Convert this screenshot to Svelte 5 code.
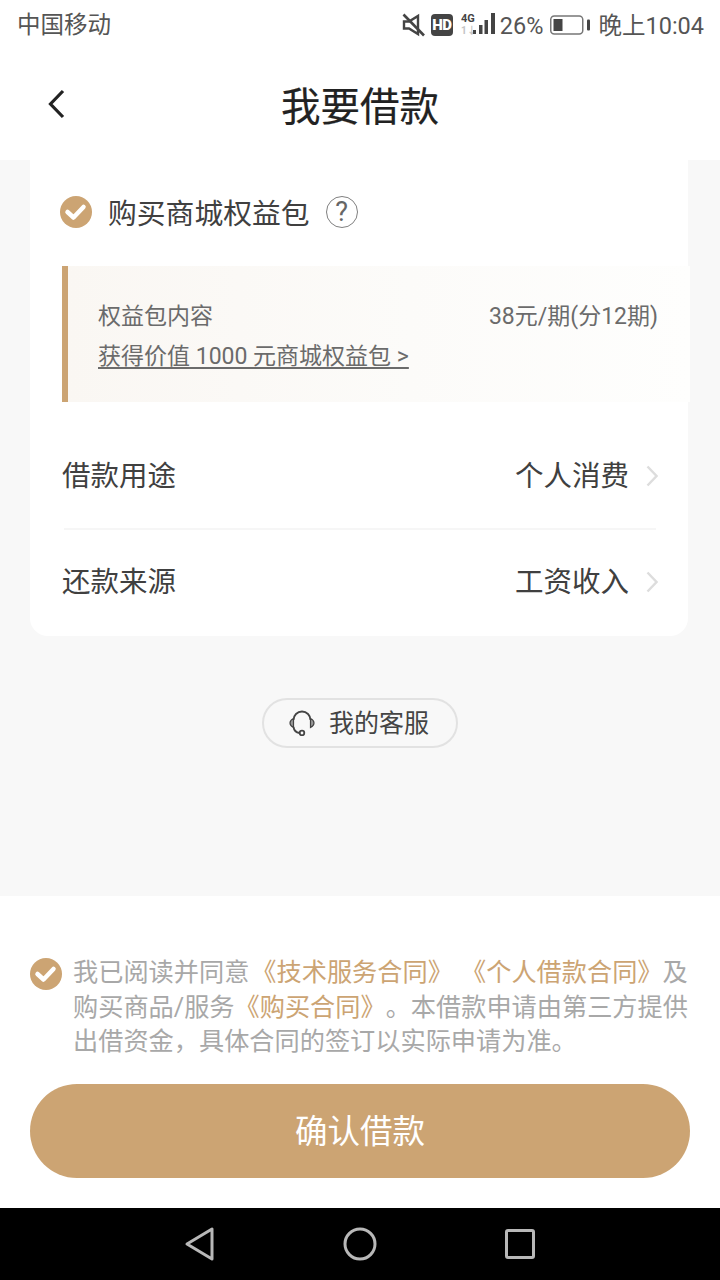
<script>
  const checkPath = 'M7.500 16l6 5.500 10-10.500';
</script>

<div class="page">
  <header class="top">
    <div class="status">
      <span class="carrier">中国移动</span>
      <div class="status-right">
        <svg class="mute" width="24" height="24" viewBox="0 0 24 24" fill="none">
          <path d="M3 8.500h5L17 3v18l-9-5.500H3z" stroke="#444" stroke-width="2.400"/>
          <path d="M2.500 1.500L23 22.500" stroke="#444" stroke-width="2.600"/>
        </svg>
        <span class="hd">HD</span>
        <svg class="signal" width="36" height="26" viewBox="0 0 36 26">
          <text x="0" y="10" class="sig4g">4G</text>
          <text x="0" y="22" class="sig-sub">1↓</text>
          <rect x="12" y="18" width="3" height="4" fill="#444"/>
          <rect x="18" y="13" width="3.500" height="9" fill="#444"/>
          <rect x="23.500" y="8" width="3.500" height="14" fill="#444"/>
          <rect x="30" y="1" width="4" height="21" fill="#444"/>
        </svg>
        <span class="pct">26%</span>
        <svg class="batt" width="41" height="20" viewBox="0 0 41 20" fill="none">
          <rect x="0.750" y="1" width="32" height="18" rx="3.500" stroke="#777" stroke-width="1.500"/>
          <rect x="3.500" y="4" width="9" height="12" fill="#444"/>
          <rect x="37" y="4.500" width="3" height="11" rx="1" fill="#444"/>
        </svg>
        <span class="time">晚上10:04</span>
      </div>
    </div>
    <div class="nav">
      <svg class="back" width="20" height="32" viewBox="0 0 20 32" fill="none">
        <path d="M16 3L3.500 16 16 29" stroke="#222" stroke-width="3.200"/>
      </svg>
      <h1>我要借款</h1>
    </div>
  </header>

  <main class="body">
    <section class="card">
      <div class="pack-row">
        <svg class="check" width="32" height="32" viewBox="0 0 32 32">
          <circle cx="16" cy="16" r="16" fill="#cca473"/>
          <path d={checkPath} fill="none" stroke="#fff" stroke-width="4.500" stroke-linecap="round" stroke-linejoin="round"/>
        </svg>
        <span class="pack-title">购买商城权益包</span>
        <span class="help">?</span>
      </div>
      <div class="benefit">
        <div class="benefit-line">
          <span>权益包内容</span>
          <span>38元/期(分12期)</span>
        </div>
        <a class="benefit-link" href="#benefit">获得价值 1000 元商城权益包 &gt;</a>
      </div>
      <div class="rows">
        <div class="row first">
          <span>借款用途</span>
          <span class="value">个人消费
            <svg width="12" height="22" viewBox="0 0 12 22" fill="none"><path d="M1.500 1.500L10.500 11 1.500 20.500" stroke="#ddd" stroke-width="2.400"/></svg>
          </span>
        </div>
        <div class="divider"></div>
        <div class="row second">
          <span>还款来源</span>
          <span class="value">工资收入
            <svg width="12" height="22" viewBox="0 0 12 22" fill="none"><path d="M1.500 1.500L10.500 11 1.500 20.500" stroke="#ddd" stroke-width="2.400"/></svg>
          </span>
        </div>
      </div>
    </section>

    <div class="service-wrap">
      <div class="service">
        <svg width="26" height="26" viewBox="0 0 26 26" fill="none" stroke="#444" stroke-width="1.800">
          <path d="M4.500 10a8.500 8.500 0 0 1 17 0"/>
          <path d="M4.500 8.500C2.500 9.500 1 11 1 13s1.500 3.500 3.500 4.500zM21.500 8.500c2 1 3.500 2.500 3.500 4.500s-1.500 3.500-3.500 4.500z" fill="#999" stroke-width="1.200"/>
          <path d="M4.500 17c.5 3.500 2.500 5.500 6 6"/>
          <circle cx="13" cy="23" r="2.300"/>
        </svg>
        <span>我的客服</span>
      </div>
    </div>
  </main>

  <footer class="foot">
    <div class="agree">
      <svg class="check agree-check" width="32" height="32" viewBox="0 0 32 32">
        <circle cx="16" cy="16" r="16" fill="#cca473"/>
        <path d={checkPath} fill="none" stroke="#fff" stroke-width="4.500" stroke-linecap="round" stroke-linejoin="round"/>
      </svg>
      <p>我已阅读并同意<em class="lead">《技术服务合同》 《个人借款合同》</em>及购买商品/服务<em>《购买合同》</em>。本借款申请由第三方提供出借资金，具体合同的签订以实际申请为准。</p>
    </div>
    <button class="confirm">确认借款</button>
  </footer>

  <nav class="sysnav">
    <svg width="32" height="36" viewBox="0 0 32 36" fill="none" stroke="#b8b8b8" stroke-width="3" stroke-linejoin="round">
      <path d="M28 3v30L3 18z"/>
    </svg>
    <svg width="34" height="34" viewBox="0 0 34 34" fill="none" stroke="#b8b8b8" stroke-width="3">
      <circle cx="17" cy="17" r="15"/>
    </svg>
    <svg width="30" height="30" viewBox="0 0 30 30" fill="none" stroke="#b8b8b8" stroke-width="3" stroke-linejoin="round">
      <rect x="1.500" y="1.500" width="27" height="27" rx="1.500"/>
    </svg>
  </nav>
</div>

<style>
  :global(body) { margin: 0; background: #f8f8f8; }
  .page {
    width: 720px; height: 1280px; display: flex; flex-direction: column; overflow: hidden;
    font-family: Roboto, "Noto Sans CJK SC", sans-serif; background: #f8f8f8; color: #333;
    text-spacing-trim: space-all;
  }
  .top { background: #fff; height: 160px; flex: none; }
  .status { height: 50px; display: flex; justify-content: space-between; align-items: center; padding: 0 16px 0 17px; color: #555; font-size: 23.500px; }
  .carrier { margin-bottom: 4px; }
  .status-right { display: flex; align-items: center; }
  .mute { margin-right: 6px; }
  .hd { width: 22px; height: 22px; border-radius: 4px; background: #444; color: #fff; font-size: 15px; font-weight: 900; display: flex; align-items: center; justify-content: center; margin-right: 8px; letter-spacing: -0.5px; }
  .sig4g { font-size: 11px; font-weight: 700; fill: #444; }
  .sig-sub { font-size: 10px; font-weight: 700; fill: #c4c4c4; }
  .signal { margin-right: 3px; }
  .pct { margin-right: 7px; margin-top: 1px; }
  .batt { margin-right: 7px; }
  .time { margin-bottom: 3px; }
  .nav { height: 110px; position: relative; display: flex; align-items: center; justify-content: center; margin-top: -1px; padding-bottom: 2px; box-sizing: border-box; }
  .back { position: absolute; left: 47px; top: 39px; }
  h1 { margin: 0; font-size: 39.500px; font-weight: 400; color: #222; -webkit-text-stroke: 0.2px #222; }

  .body { flex: 1; min-height: 0; }
  .card { margin: 0 32px 0 30px; background: #fff; border-radius: 0 0 18px 18px; height: 476px; display: flex; flex-direction: column; }
  .pack-row { height: 106px; box-sizing: border-box; padding: 0 0 2px 30px; display: flex; align-items: center; flex: none; }
  .pack-title { font-size: 28.800px; color: #404040; margin: 0 0 2px 16px; }
  .help { width: 32px; height: 32px; box-sizing: border-box; border: 1.500px solid #808080; border-radius: 50%; margin-left: 16px; display: flex; align-items: center; justify-content: center; font-size: 27px; color: #666; }
  .benefit { margin-left: 32px; margin-right: -2px; height: 136px; box-sizing: border-box; border-left: 6px solid #cca473; background: linear-gradient(90deg, #faf7f3, #fcfbf9 55%, #fefefd); padding: 33px 32px 0 30px; color: #6b6b6b; font-size: 23px; display: flex; flex-direction: column; flex: none; }
  .benefit-line { display: flex; justify-content: space-between; height: 36px; line-height: 36px; }
  .benefit-link { color: #6b6b6b; line-height: 36px; margin-top: 4px; text-decoration: underline; text-underline-offset: 3px; }
  .rows { padding: 20px 30px 0 32px; flex: 1; }
  .row { display: flex; align-items: center; justify-content: space-between; font-size: 28.500px; color: #404040; box-sizing: border-box; }
  .first { height: 106px; padding-bottom: 4px; }
  .second { height: 98px; }
  .divider { height: 2px; margin: 0 2px; background: #f6f6f6; }
  .value { display: flex; align-items: center; gap: 17px; }
  .value svg { margin-top: 6px; }
  .service-wrap { display: flex; justify-content: center; margin-top: 62px; }
  .service { width: 196px; height: 50px; box-sizing: border-box; border: 2px solid #e2e2e2; border-radius: 25px; padding-right: 2px; display: flex; align-items: center; justify-content: center; gap: 14px; font-size: 25px; color: #444; }
  .service span { margin-bottom: 4px; }

  .foot { background: #fff; height: 312px; flex: none; box-sizing: border-box; padding: 60px 30px 0; }
  .agree { display: flex; gap: 11px; height: 128px; }
  .agree-check { flex: none; margin-top: 2px; }
  .agree p { margin: 0; font-size: 25.200px; line-height: 34.500px; word-spacing: 2px; color: #a8a8a8; width: 620px; }
  em { font-style: normal; color: #cca473; }
  .lead { margin-left: 2px; }
  .confirm { display: block; width: 660px; height: 94px; border: 0; border-radius: 47px; background: #cca473; color: #fff; font-size: 32.500px; font-family: inherit; padding: 0 0 5px; }

  .sysnav { height: 72px; flex: none; background: #000; display: grid; grid-template-columns: repeat(3, 160px); justify-content: center; justify-items: center; align-items: center; }
</style>
